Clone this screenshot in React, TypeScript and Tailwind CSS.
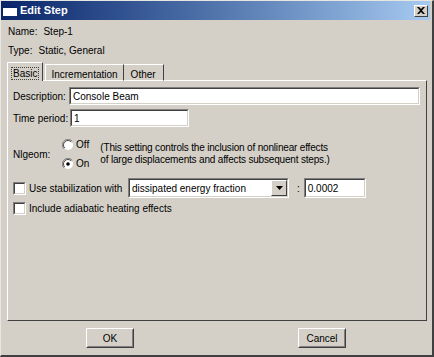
import React from "react";

const font = { fontFamily: '"Liberation Sans", Arial, sans-serif' };

function Sunken({ className = "", children }: { className?: string; children?: React.ReactNode }) {
  return (
    <div className={`border border-t-[#808080] border-l-[#808080] border-b-white border-r-white ${className}`}>
      <div className="h-full border border-t-[#404040] border-l-[#404040] border-b-[#d4d0c8] border-r-[#d4d0c8] bg-white flex items-center px-[2px] overflow-hidden whitespace-nowrap">
        {children}
      </div>
    </div>
  );
}

function CheckBox() {
  return (
    <div className="w-[13px] h-[13px] border border-t-[#808080] border-l-[#808080] border-b-white border-r-white">
      <div className="w-full h-full border border-t-[#404040] border-l-[#404040] border-b-[#d4d0c8] border-r-[#d4d0c8] bg-white" />
    </div>
  );
}

function Radio({ checked }: { checked?: boolean }) {
  return (
    <svg width="12" height="12" viewBox="0 0 12 12">
      <circle cx="6" cy="6" r="5" fill="white" />
      <path d="M10.2 2.2 A5.3 5.3 0 0 0 1.8 9.8" fill="none" stroke="#808080" strokeWidth="1" />
      <path d="M9.3 2.9 A4.3 4.3 0 0 0 2.7 9.1" fill="none" stroke="#404040" strokeWidth="1" />
      {checked && <circle cx="6" cy="6" r="1.8" fill="#000" />}
    </svg>
  );
}

function Button({ label }: { label: string }) {
  return (
    <div className="w-[48px] h-[20px] border border-t-white border-l-white border-b-[#404040] border-r-[#404040]">
      <div className="h-full border border-t-[#d4d0c8] border-l-[#d4d0c8] border-b-[#808080] border-r-[#808080] flex items-center justify-center text-[10px] text-black">
        {label}
      </div>
    </div>
  );
}

export default function App() {
  return (
    <div style={font} className="w-[434px] h-[357px] bg-[#d4d0c8] text-[10px] text-black border-l border-t border-l-[#e8e6e0] border-t-[#e8e6e0] border-r-2 border-b-2 border-r-[#404040] border-b-[#404040] flex flex-col overflow-hidden">
      {/* Title bar */}
      <div className="h-[19px] mr-[2px] bg-gradient-to-r from-[#0a246a] to-[#a6caf0] flex items-center pl-[2px] pr-[2px]">
        <div className="w-[14px] h-[10px] bg-white border-t-[2px] border-t-[#0a246a]" />
        <span className="ml-[3px] text-white font-bold text-[11px]" style={font}>Edit Step</span>
        <div className="ml-auto w-[14px] h-[12px] bg-[#d4d0c8] border border-t-white border-l-white border-b-[#404040] border-r-[#404040] flex items-center justify-center">
          <svg width="8" height="7" viewBox="0 0 8 7">
            <path d="M0 0 L2 0 L4 2 L6 0 L8 0 L5 3.5 L8 7 L6 7 L4 5 L2 7 L0 7 L3 3.5 Z" fill="#000" />
          </svg>
        </div>
      </div>

      <div className="pl-[6px] pr-[5px] flex flex-col flex-1">
        <div className="mt-[4px] h-[14px] flex items-center gap-[6px] pl-[1px]">
          <span>Name:</span>
          <span>Step-1</span>
        </div>
        <div className="mt-[5px] h-[14px] flex items-center gap-[6px] pl-[1px]">
          <span>Type:</span>
          <span>Static, General</span>
        </div>

        {/* Tabs */}
        <div className="mt-[5px] flex items-end h-[19px] relative z-10">
          <div className="h-[19px] px-[4px] pt-[3px] bg-[#d4d0c8] border-l border-t border-r border-l-white border-t-white border-r-[#404040]">
            <span className="outline outline-1 outline-dotted outline-[#404040] px-[1px]">Basic</span>
          </div>
          <div className="h-[17px] px-[5px] ml-[2px] pt-[2px] border-l border-t border-r border-l-white border-t-white border-r-[#404040] border-b border-b-white">
            Incrementation
          </div>
          <div className="h-[17px] px-[7px] pt-[2px] border-t border-r border-t-white border-r-[#404040] border-b border-b-white">
            Other
          </div>
        </div>

        {/* Panel */}
        <div className="h-[241px] -mt-[1px] border border-l-white border-t-white border-r-[#404040] border-b-[#404040] flex flex-col pl-[5px] pr-[6px]">
          <div className="mt-[6px] flex items-center">
            <span className="w-[56px]">Description:</span>
            <Sunken className="flex-1 h-[18px]">Console Beam</Sunken>
          </div>
          <div className="mt-[4px] flex items-center">
            <span className="w-[57px]">Time period:</span>
            <Sunken className="w-[119px] h-[18px]">1</Sunken>
          </div>

          <div className="mt-[10px] flex items-center">
            <span className="w-[49px]">Nlgeom:</span>
            <div className="flex flex-col gap-[4px]">
              <div className="flex items-center gap-[2px] h-[15px]"><Radio /><span>Off</span></div>
              <div className="flex items-center gap-[2px] h-[15px]"><Radio checked /><span>On</span></div>
            </div>
            <div className="ml-[11px] leading-[12px] tracking-[-0.18px]">
              <div>(This setting controls the inclusion of nonlinear effects</div>
              <div>of large displacements and affects subsequent steps.)</div>
            </div>
          </div>

          <div className="mt-[7px] flex items-center">
            <CheckBox />
            <span className="ml-[3px] w-[99px]">Use stabilization with</span>
            <div className="w-[161px] h-[20px] border border-t-[#808080] border-l-[#808080] border-b-white border-r-white">
              <div className="h-full border border-t-[#404040] border-l-[#404040] border-b-[#d4d0c8] border-r-[#d4d0c8] bg-white flex items-center">
                <span className="pl-[2px] flex-1">dissipated energy fraction</span>
                <div className="w-[16px] h-[16px] bg-[#d4d0c8] border border-t-white border-l-white border-b-[#404040] border-r-[#404040] flex items-center justify-center">
                  <svg width="7" height="4" viewBox="0 0 7 4"><path d="M0 0 H7 L3.5 4 Z" fill="#000" /></svg>
                </div>
              </div>
            </div>
            <span className="ml-[8px] mr-[4px]">:</span>
            <Sunken className="w-[62px] h-[20px]">0.0002</Sunken>
          </div>

          <div className="mt-[3px] flex items-center h-[15px]">
            <CheckBox />
            <span className="ml-[3px]">Include adiabatic heating effects</span>
          </div>
        </div>

        <div className="flex mt-[7px]">
          <div className="ml-[79px]"><Button label="OK" /></div>
          <div className="ml-[164px]"><Button label="Cancel" /></div>
        </div>
      </div>
    </div>
  );
}
